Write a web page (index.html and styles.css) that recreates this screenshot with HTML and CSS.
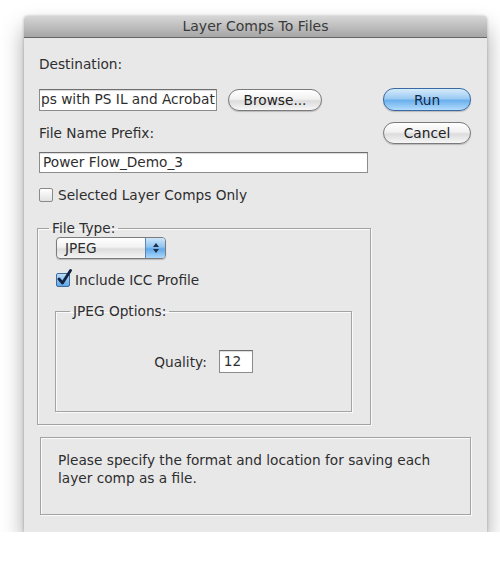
FILE: index.html
```html
<!DOCTYPE html>
<html lang="en">
<head>
    <meta charset="UTF-8">
    <meta name="viewport" content="width=device-width, initial-scale=1.0">
    <title>Layer Comps To Files</title>
    <link rel="stylesheet" href="styles.css">
</head>
<body>
    <div class="window">
        <div class="titlebar">Layer Comps To Files</div>

        <div class="content">
            <div class="top">
                <div class="main">
                    <div class="label">Destination:</div>
                    <div class="dest-row">
                        <div class="field dest">ps with PS IL and Acrobat</div>
                        <button type="button" class="btn browse">Browse...</button>
                    </div>
                    <div class="label prefix-label">File Name Prefix:</div>
                    <div class="field prefix">Power Flow_Demo_3</div>
                    <label class="check-row selected">
                        <span class="checkbox"></span>
                        <span>Selected Layer Comps Only</span>
                    </label>
                </div>
                <div class="actions">
                    <button type="button" class="btn run">Run</button>
                    <button type="button" class="btn cancel">Cancel</button>
                </div>
            </div>

            <fieldset class="group file-type">
                <legend>File Type:</legend>
                <div class="popup">
                    <span class="popup-text">JPEG</span>
                    <span class="popup-arrows">
                        <svg width="8" height="12" viewBox="0 0 8 12">
                            <path d="M4 1 L7 5 L1 5 Z" fill="#1d2f4a"/>
                            <path d="M4 11 L7 7 L1 7 Z" fill="#1d2f4a"/>
                        </svg>
                    </span>
                </div>
                <label class="check-row icc">
                    <span class="checkbox checked">
                        <svg width="17" height="18" viewBox="0 0 17 18">
                            <path d="M3 10 L6.5 14 L14.5 1.5" fill="none" stroke="#10233f" stroke-width="2.8" stroke-linecap="round" stroke-linejoin="round"/>
                        </svg>
                    </span>
                    <span>Include ICC Profile</span>
                </label>

                <fieldset class="group jpeg-options">
                    <legend>JPEG Options:</legend>
                    <div class="quality-row">
                        <span>Quality:</span>
                        <div class="field quality">12</div>
                    </div>
                </fieldset>
            </fieldset>

            <div class="description">
                Please specify the format and location for saving each
                layer comp as a file.
            </div>
        </div>
    </div>
</body>
</html>
```

FILE: styles.css
```css
body {
    margin: 0;
    background-color: #fff;
    font-family: "DejaVu Sans", Verdana, sans-serif;
    font-size: 13.7px;
    color: #2e2e2e;
}

.window {
    width: 463px;
    height: 516px;
    margin: 16px 0 0 24px;
    background-color: #e8e8e9;
    border-radius: 4px 4px 0 0;
    box-shadow: 0 12px 22px rgba(0, 0, 0, 0.35), 0 0 3px rgba(0, 0, 0, 0.25);
    display: flex;
    flex-direction: column;
}

.titlebar {
    height: 21px;
    line-height: 21px;
    text-align: center;
    font-size: 14px;
    color: #3a3a3a;
    background: linear-gradient(#d6d6d6, #a6a6a6);
    border-bottom: 1px solid #666;
    border-radius: 4px 4px 0 0;
}

.content {
    padding: 18px 16px 18px 15px;
}

.top {
    display: flex;
    justify-content: space-between;
}

.label {
    line-height: 16px;
}

.dest-row {
    display: flex;
    align-items: center;
    gap: 11px;
    margin-top: 17px;
}

.field {
    box-sizing: border-box;
    background-color: #fff;
    border: 1px solid #8c8c8c;
    border-top-color: #6e6e6e;
    box-shadow: inset 0 1px 1px rgba(0, 0, 0, 0.15);
    line-height: 19px;
    padding: 0 3px;
    white-space: nowrap;
    overflow: hidden;
}

.dest {
    width: 178px;
    height: 22px;
    padding: 0 2px 0 1px;
}

.prefix-label {
    margin-top: 14px;
}

.prefix {
    width: 329px;
    height: 21px;
    margin-top: 11px;
}

.btn {
    box-sizing: border-box;
    height: 22px;
    border: 1px solid #7a7a7a;
    border-radius: 11px;
    background: linear-gradient(#ffffff 0%, #f1f1f1 45%, #dcdcdc 55%, #f6f6f6 100%);
    box-shadow: 0 1px 1px rgba(0, 0, 0, 0.2);
    font-family: inherit;
    font-size: 13.7px;
    color: #222;
    padding: 0;
}

.browse {
    width: 94px;
}

.actions {
    display: flex;
    flex-direction: column;
    gap: 11px;
    margin-top: 32px;
}

.run,
.cancel {
    width: 88px;
}

.run {
    height: 23px;
    border-color: #3a6aa3;
    background: linear-gradient(#d6ebfb 0%, #9ccbf3 45%, #6ab0ec 55%, #b3dcfd 100%);
    color: #13294a;
}

.check-row {
    display: flex;
    align-items: center;
    gap: 5px;
    line-height: 16px;
}

.selected {
    margin-top: 14px;
}

.checkbox {
    box-sizing: border-box;
    width: 14px;
    height: 14px;
    flex-shrink: 0;
    border: 1px solid #8a8a8a;
    border-radius: 2px;
    background: linear-gradient(#ffffff, #e2e2e2);
    position: relative;
}

.checkbox.checked {
    border-color: #3d6aa0;
    background: linear-gradient(#bcdcf7, #5ea6e6);
}

.checkbox svg {
    position: absolute;
    left: -1px;
    top: -5px;
}

.group {
    margin: 0;
    border: 1px solid #a3a3a3;
    box-shadow: 1px 1px 0 #fafafa, inset 1px 1px 0 #fafafa;
}

.group legend {
    padding: 0 3px;
    line-height: 16px;
}

.file-type {
    width: 334px;
    box-sizing: border-box;
    margin: 17px 0 0 -2px;
    padding: 0 18px 12px 18px;
}

.file-type > legend {
    margin-left: -7px;
}

.popup {
    box-sizing: border-box;
    width: 110px;
    height: 22px;
    margin-top: 1px;
    display: flex;
    border: 1px solid #7b7b7b;
    border-radius: 4px;
    background: linear-gradient(#ffffff 0%, #f2f2f2 45%, #dddddd 55%, #f4f4f4 100%);
    box-shadow: 0 1px 1px rgba(0, 0, 0, 0.2);
    overflow: hidden;
}

.popup-text {
    flex: 1;
    padding-left: 8px;
    line-height: 20px;
}

.popup-arrows {
    width: 19px;
    display: flex;
    align-items: center;
    justify-content: center;
    border-left: 1px solid #5d85b8;
    background: linear-gradient(#cde6fb 0%, #8fc3f1 45%, #62a9ea 55%, #a9d7fc 100%);
}

.icc {
    margin-top: 13px;
    gap: 5px;
}

.jpeg-options {
    box-sizing: border-box;
    width: 297px;
    margin: 15px 0 0 -1px;
    padding: 0 0 38px 0;
}

.jpeg-options > legend {
    margin-left: 14px;
}

.quality-row {
    display: flex;
    align-items: center;
    justify-content: center;
    gap: 12px;
    margin-top: 31px;
}

.quality {
    width: 34px;
    height: 23px;
    line-height: 21px;
    padding: 0 4px;
}

.description {
    box-sizing: border-box;
    height: 78px;
    margin: 12px 0 0 1px;
    padding: 13px 17px 0 17px;
    border: 1px solid #a3a3a3;
    box-shadow: 1px 1px 0 #fafafa, inset 1px 1px 0 #fafafa;
    line-height: 18px;
}
```
